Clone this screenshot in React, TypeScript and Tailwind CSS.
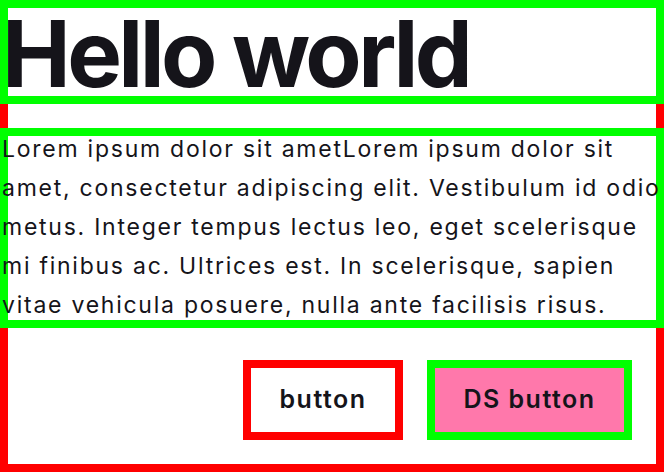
import React from "react";

export default function App() {
  const lines = [
    "Lorem ipsum dolor sit ametLorem ipsum dolor sit",
    "amet, consectetur adipiscing elit. Vestibulum id odio",
    "metus. Integer tempus lectus leo, eget scelerisque",
    "mi finibus ac. Ultrices est. In scelerisque, sapien",
    "vitae vehicula posuere, nulla ante facilisis risus.",
  ];
  return (
    <div className="w-[664px] h-[472px] bg-white border-8 border-[#ff0000] flex flex-col text-[#15141a] font-['Inter',sans-serif]">
      <h1 className="-mx-[8px] -mt-[8px] h-[104px] shrink-0 border-8 border-[#00ff00] pt-[2px] text-[92px] leading-[88px] font-bold tracking-[-3.6px] whitespace-nowrap">
        <span className="block -ml-[6px]">Hello world</span>
      </h1>
      <p className="-mx-[8px] mt-[24px] h-[200px] shrink-0 border-8 border-[#00ff00] text-[23px] leading-[39px] tracking-[1.75px] whitespace-nowrap">
        <span className="block -mt-[6.5px] -ml-[6px]">
          {lines.map((l) => (
            <span key={l} className="block">
              {l}
            </span>
          ))}
        </span>
      </p>
      <div className="mt-[32px] flex justify-end gap-[24px] pr-[24px]">
        <button className="h-[80px] w-[160px] border-8 border-[#ff0000] bg-white text-[25px] font-semibold tracking-[1.5px] flex items-center justify-center">
          button
        </button>
        <button className="h-[80px] w-[205px] border-8 border-[#00ff00] bg-[#ff78ab] text-[25px] font-semibold tracking-[1.5px] flex items-center justify-center">
          DS button
        </button>
      </div>
    </div>
  );
}
